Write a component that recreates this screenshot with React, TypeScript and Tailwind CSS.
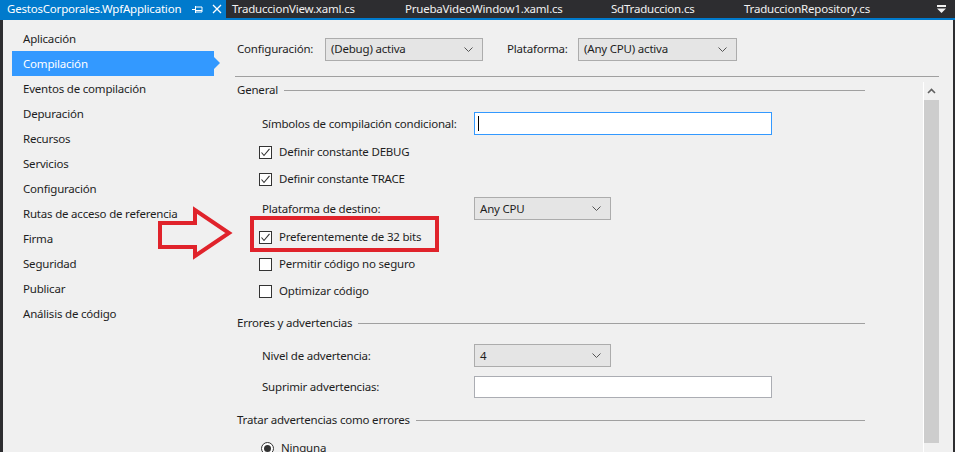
import { ReactNode } from 'react'

const NAV = [
  'Aplicación',
  'Compilación',
  'Eventos de compilación',
  'Depuración',
  'Recursos',
  'Servicios',
  'Configuración',
  'Rutas de acceso de referencia',
  'Firma',
  'Seguridad',
  'Publicar',
  'Análisis de código',
]

const TABS = [
  { label: 'TraduccionView.xaml.cs', w: 'w-[173px]' },
  { label: 'PruebaVideoWindow1.xaml.cs', w: 'w-[206px]' },
  { label: 'SdTraduccion.cs', w: 'w-[133px]' },
  { label: 'TraduccionRepository.cs', w: 'w-[190px]' },
]

function Chevron() {
  return (
    <svg width="9" height="5" viewBox="0 0 9 5" className="shrink-0">
      <path d="M0.5 0.5 L4.5 4.5 L8.5 0.5" fill="none" stroke="#555" strokeWidth="1" />
    </svg>
  )
}

function Select({ value, w }: { value: string; w: string }) {
  return (
    <div className={`${w} h-[23px] shrink-0 flex items-center justify-between pl-[5px] pr-[9px] bg-[#e5e5e5] border border-[#acacac] text-[#1e1e1e]`}>
      <span>{value}</span>
      <Chevron />
    </div>
  )
}

function CheckBox({ checked }: { checked: boolean }) {
  return (
    <div className="w-[13px] h-[13px] border border-[#333] bg-white flex items-center justify-center shrink-0">
      {checked && (
        <svg width="11" height="11" viewBox="0 0 11 11">
          <path d="M1.5 5.5 L4 8.5 L9.5 1.8" fill="none" stroke="#333" strokeWidth="1.1" />
        </svg>
      )}
    </div>
  )
}

function CheckRow({ label, checked, mt }: { label: string; checked: boolean; mt: string }) {
  return (
    <div className={`${mt} h-[20px] shrink-0 flex items-center gap-[7px] pl-[24px]`}>
      <CheckBox checked={checked} />
      <span>{label}</span>
    </div>
  )
}

function Heading({ children, mt }: { children: ReactNode; mt: string }) {
  return (
    <div className={`${mt} h-[16px] shrink-0 flex items-center gap-[6px] pl-[2px] pr-[58px]`}>
      <span className="whitespace-nowrap">{children}</span>
      <div className="flex-1 h-px bg-[#a0a0a0]" />
    </div>
  )
}

function FieldRow({ label, mt, h, children }: { label: string; mt: string; h: string; children: ReactNode }) {
  return (
    <div className={`${mt} ${h} shrink-0 flex items-center pl-[27px]`}>
      <span className="w-[212px] shrink-0 whitespace-nowrap">{label}</span>
      {children}
    </div>
  )
}

export default function App() {
  return (
    <div
      className="relative w-[955px] h-[452px] overflow-hidden bg-[#2d2d30] text-[11.5px] tracking-[-0.2px] text-[#1e1e1e]"
      style={{ fontFamily: '"Noto Sans", "Open Sans", sans-serif' }}
    >
      {/* Document tab strip */}
      <div className="h-[18px] flex items-center text-[#f1f1f1]">
        <div className="w-[226px] h-full bg-[#007acc] flex items-center pl-[7px] text-white">
          <span className="whitespace-nowrap">GestosCorporales.WpfApplication</span>
          <svg width="11" height="9" viewBox="0 0 11 9" className="ml-[11px]">
            <path d="M0 4.5 H3.5 M3.5 1 V8 M3.5 2 H10 V7 H3.5 M3.5 5.5 H10" fill="none" stroke="#fff" strokeWidth="1" />
          </svg>
          <svg width="10" height="10" viewBox="0 0 10 10" className="ml-[9px]">
            <path d="M1 1 L9 9 M9 1 L1 9" stroke="#fff" strokeWidth="1.3" />
          </svg>
        </div>
        {TABS.map(t => (
          <div key={t.label} className={`${t.w} h-full flex items-center pl-[6px] whitespace-nowrap`}>
            {t.label}
          </div>
        ))}
        <div className="flex-1" />
        <svg width="9" height="9" viewBox="0 0 9 9" className="mr-[9px]">
          <rect x="0" y="0" width="9" height="2" fill="#f1f1f1" />
          <path d="M0 3.5 H9 L4.5 8 Z" fill="#f1f1f1" />
        </svg>
      </div>
      <div className="h-[2px] bg-[#007acc]" />

      {/* Body */}
      <div className="h-[432px] pl-[3px] pr-[2px]">
        <div className="h-full bg-[#f0f0f0] flex">
          {/* Property page list */}
          <div className="w-[232px] shrink-0 pl-[9px] pt-[6px]">
            {NAV.map(item => {
              const active = item === 'Compilación'
              return (
                <div
                  key={item}
                  className={`relative w-[202px] h-[25px] flex items-center pl-[11px] whitespace-nowrap ${
                    active ? 'bg-[#3399ff] text-white' : ''
                  }`}
                >
                  {item}
                  {active && (
                    <div className="absolute right-[-6px] top-[6px] w-0 h-0 border-y-[6px] border-y-transparent border-l-[6px] border-l-[#3399ff]" />
                  )}
                </div>
              )
            })}
          </div>

          {/* Page content */}
          <div className="w-[704px] shrink-0 flex flex-col">
            <div className="mt-[18px] h-[22px] shrink-0 flex items-center pl-[2px]">
              <span className="w-[88px] shrink-0">Configuración:</span>
              <Select value="(Debug) activa" w="w-[158px]" />
              <span className="ml-[24px] w-[71px] shrink-0">Plataforma:</span>
              <Select value="(Any CPU) activa" w="w-[159px]" />
            </div>
            <div className="mt-[16px] h-px shrink-0 bg-[#a0a0a0]" />

            <div className="flex-1 flex min-h-0 overflow-hidden">
              <div className="flex-1 flex flex-col">
                <Heading mt="mt-[5px]">General</Heading>

                <FieldRow label="Símbolos de compilación condicional:" mt="mt-[14px]" h="h-[23px]">
                  <div className="w-[298px] h-[23px] bg-white border border-[#3399ff] flex items-center pl-[3px]">
                    <div className="w-px h-[15px] bg-black" />
                  </div>
                </FieldRow>

                <CheckRow label="Definir constante DEBUG" checked mt="mt-[7px]" />
                <CheckRow label="Definir constante TRACE" checked mt="mt-[7px]" />

                <FieldRow label="Plataforma de destino:" mt="mt-[8px]" h="h-[23px]">
                  <Select value="Any CPU" w="w-[137px]" />
                </FieldRow>

                <CheckRow label="Preferentemente de 32 bits" checked mt="mt-[7px]" />
                <CheckRow label="Permitir código no seguro" checked={false} mt="mt-[7px]" />
                <CheckRow label="Optimizar código" checked={false} mt="mt-[7px]" />

                <Heading mt="mt-[14px]">Errores y advertencias</Heading>

                <FieldRow label="Nivel de advertencia:" mt="mt-[13px]" h="h-[23px]">
                  <Select value="4" w="w-[137px]" />
                </FieldRow>
                <FieldRow label="Suprimir advertencias:" mt="mt-[9px]" h="h-[22px]">
                  <div className="w-[298px] h-[22px] bg-white border border-[#abadb3]" />
                </FieldRow>

                <Heading mt="mt-[14px]">Tratar advertencias como errores</Heading>

                <div className="mt-[10px] h-[20px] shrink-0 flex items-center gap-[7px] pl-[26px]">
                  <div className="w-[13px] h-[13px] rounded-full border border-[#333] bg-white flex items-center justify-center">
                    <div className="w-[7px] h-[7px] rounded-full bg-[#333]" />
                  </div>
                  <span>Ninguna</span>
                </div>
              </div>

              {/* Vertical scrollbar */}
              <div className="w-[16px] shrink-0 mt-[5px] border-l border-white flex flex-col">
                <div className="h-[18px] shrink-0 flex items-center justify-center">
                  <svg width="9" height="6" viewBox="0 0 9 6">
                    <path d="M1 5 L4.5 1.5 L8 5" fill="none" stroke="#606060" strokeWidth="1.6" />
                  </svg>
                </div>
                <div className="h-[343px] shrink-0 bg-[#cdcdcd]" />
              </div>
            </div>
          </div>
        </div>
      </div>

      {/* Red annotation: arrow + highlight box */}
      <svg width="955" height="452" className="absolute inset-0 pointer-events-none">
        <polygon
          points="160,223 195,223 195,210 229,233 195,256 195,247 160,247"
          fill="none"
          stroke="#e0232b"
          strokeWidth="4"
          strokeLinejoin="miter"
        />
        <rect x="252" y="218" width="185" height="32" fill="none" stroke="#e0232b" strokeWidth="4" />
      </svg>
    </div>
  )
}
